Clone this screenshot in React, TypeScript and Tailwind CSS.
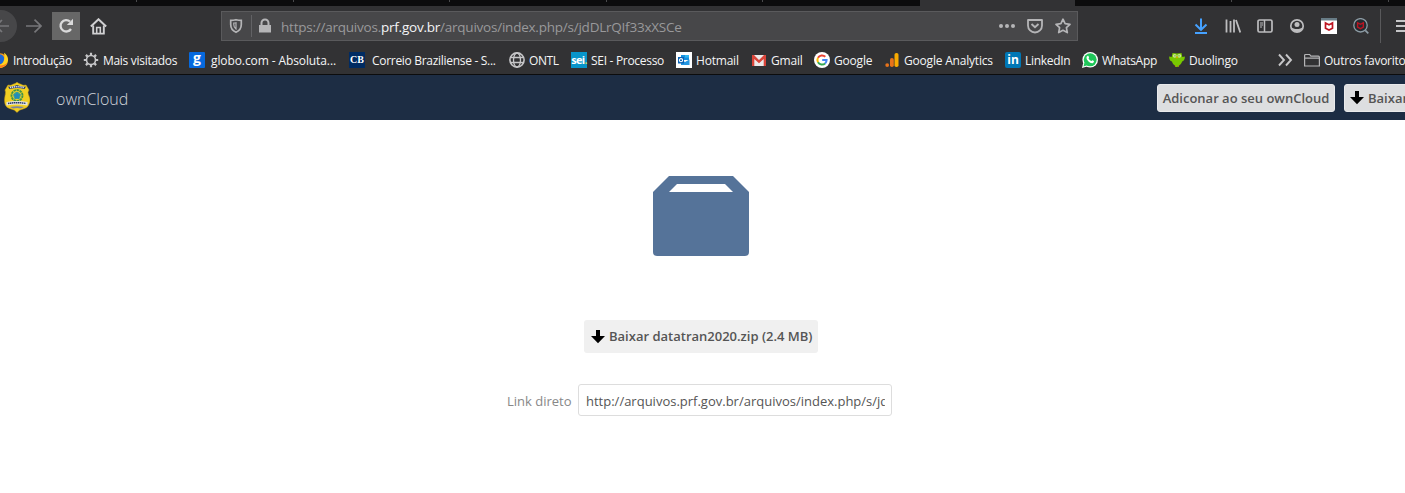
import React from "react";

type Bookmark = { label: string; box: string; text: string; icon: React.ReactNode };

const Svg = ({ children, size = 16, className = "" }: { children: React.ReactNode; size?: number; className?: string }) => (
  <svg width={size} height={size} viewBox="0 0 16 16" className={`block shrink-0 ${className}`}>
    {children}
  </svg>
);

const Firefox = () => (
  <Svg>
    <circle cx="8" cy="8.500" r="7.200" fill="#ff9b15" />
    <circle cx="7.500" cy="7.200" r="5" fill="#1c67d8" />
    <path d="M12 .8c3 2 4.300 4.300 4 7.700-.4 4.300-3.500 7.300-8 7.300-3 0-5-1.400-6.500-3.500 3 1.600 6.500 1 8.500-.8 2.300-2.300 3-6 2-10.700z" fill="#ffd31f" />
    <path d="M1.500 12c2 3 6 4.500 9.500 3.100 2-.8 3.800-2.500 4.500-4.600-3 3.500-9 4-14 1.500z" fill="#ff7a1c" />
  </Svg>
);

const Gear = () => (
  <Svg>
    <g stroke="#c6c6c8" fill="none">
      <circle cx="8" cy="8" r="4.500" strokeWidth="1.600" />
      <path d="M8 .8v2.500M8 12.700v2.500M.8 8h2.500M12.700 8h2.500M2.900 2.900l1.700 1.700M11.400 11.400l1.700 1.700M2.900 13.100l1.700-1.700M11.400 4.600l1.700-1.700" strokeWidth="2.200" />
    </g>
  </Svg>
);

const Tile = ({ className, children }: { className: string; children: React.ReactNode }) => (
  <span className={`flex h-4 w-4 shrink-0 items-center justify-center ${className}`}>{children}</span>
);

const Globe = () => (
  <Svg>
    <g fill="none" stroke="#c6c6c8" strokeWidth="1.300">
      <circle cx="8" cy="8" r="7.100" strokeWidth="1.600" />
      <ellipse cx="8" cy="8" rx="3.500" ry="7" />
      <path d="M1.500 5.500h13M1.500 10.500h13" />
    </g>
  </Svg>
);

const Outlook = () => (
  <Svg>
    <path d="M0 0h16v16H0z" fill="#fff" />
    <path d="M5 3h8v5H5z" fill="#1490df" />
    <path d="M9 3h4v2.500H9z" fill="#32b8f2" />
    <path d="M5 7.500 9 10l4.500-2.500V13H5z" fill="#2596e2" />
    <path d="M2 5h6v6.500H2z" fill="#0a64b8" />
    <circle cx="5" cy="8.200" r="1.600" fill="none" stroke="#fff" strokeWidth="1.100" />
  </Svg>
);

const Gmail = () => (
  <Svg>
    <path d="M1 3h14v11H1z" fill="#eceaea" />
    <path d="M1 3h2l5 5 5-5h2v11h-2.300V7L8 11.200 3.300 7v7H1z" fill="#d9453a" />
  </Svg>
);

const Google = () => (
  <Svg>
    <circle cx="8" cy="8" r="8" fill="#fff" />
    <g fill="none" strokeWidth="2">
      <path d="M11.300 4.800A4.600 4.600 0 0 0 4 5.800" stroke="#ea4335" />
      <path d="M4 5.800a4.600 4.600 0 0 0 0 4.500" stroke="#fbbc05" />
      <path d="M4 10.300a4.600 4.600 0 0 0 7.100 1.100" stroke="#34a853" />
      <path d="M11.100 11.400A4.600 4.600 0 0 0 12.600 8H8.200" stroke="#4285f4" />
    </g>
  </Svg>
);

const Analytics = () => (
  <Svg>
    <rect x="10.500" y="1" width="4" height="14" rx="1.800" fill="#f9ab00" />
    <rect x="6" y="6" width="3.800" height="9" rx="1.800" fill="#e8731a" />
    <circle cx="3.200" cy="13.100" r="1.900" fill="#e8731a" />
  </Svg>
);

const WhatsApp = () => (
  <Svg>
    <circle cx="8.200" cy="7.800" r="7.800" fill="#fff" />
    <path d="M0 16l1.200-5L5 14.500z" fill="#fff" />
    <circle cx="8.200" cy="7.800" r="6.500" fill="#1fc659" />
    <path d="M1.500 14.500l1-4 2.700 2.800z" fill="#1fc659" />
    <path d="M5.200 4.200c.9-.8 1.400-.2 1.800 1.200.1.500-.5.900-.5 1.200.6 1.200 1.500 2 2.700 2.500.4 0 .8-1 1.200-.8l1.500.8c.3.300-.2 1.800-1.300 2.100C8.200 11.700 4.300 8 4.500 5.500c0-.5.300-1 .7-1.300z" fill="#fff" />
  </Svg>
);

const Duolingo = () => (
  <Svg>
    <path d="M3.500 1c1.500 0 3 .5 4.500.5S11 1 12.500 1l.8 4 2.500-.5c.3 2.800-1 4.400-2.700 5C12.500 12 11 13 9.500 13.500L8.500 15H7l-.5-1.500C4.800 13 3.500 12 3 9.500 1 9 .1 7.500.2 4.500l2.500.5z" fill="#78c800" />
    <circle cx="5.700" cy="3.800" r="1.900" fill="#c9ed8c" />
    <circle cx="10.300" cy="3.800" r="1.900" fill="#c9ed8c" />
    <circle cx="6" cy="3.800" r=".6" fill="#5c6b3b" />
    <circle cx="10" cy="3.800" r=".6" fill="#5c6b3b" />
    <path d="M6.900 4.800h2.200L8 6.800z" fill="#ff9c00" />
    <path d="M5.500 13.500h1.700l-.7 1.500zM8.800 13.500h1.700l-1 1.500z" fill="#d9b400" />
  </Svg>
);

const bookmarks: Bookmark[] = [
  { label: "Introdução", box: "w-[91px] gap-[5px]", text: "tracking-[-0.25px]", icon: <Firefox /> },
  { label: "Mais visitados", box: "w-[106px] gap-1", text: "tracking-[-0.3px]", icon: <Gear /> },
  {
    label: "globo.com - Absoluta...", box: "w-[160px] gap-[6px]", text: "tracking-[-0.1px]",
    icon: <Tile className="rounded-[1px] bg-[#0669de] font-['Open_Sans',sans-serif] text-[14px] font-bold text-white"><span className="-mt-1">g</span></Tile>,
  },
  {
    label: "Correio Braziliense - S...", box: "w-[160px] gap-[7px]", text: "tracking-[-0.3px]",
    icon: <Tile className="bg-[#002b62] font-['Liberation_Serif',serif] text-[10px] font-bold text-white"><span>CB</span></Tile>,
  },
  { label: "ONTL", box: "w-[62px] gap-1", text: "tracking-[-0.4px]", icon: <Globe /> },
  {
    label: "SEI - Processo", box: "w-[105px] gap-1", text: "tracking-[-0.3px]",
    icon: <Tile className="bg-[#0895ca] font-['Open_Sans',sans-serif] text-[11px] font-bold tracking-[-0.7px] text-white"><span className="-mt-px">sei<span className="text-[#b6db71]">.</span></span></Tile>,
  },
  { label: "Hotmail", box: "w-[75px] gap-1", text: "tracking-[-0.2px]", icon: <Outlook /> },
  { label: "Gmail", box: "w-[63px] gap-1", text: "tracking-[-0.2px]", icon: <Gmail /> },
  { label: "Google", box: "w-[70px] gap-1", text: "tracking-[-0.2px]", icon: <Google /> },
  { label: "Google Analytics", box: "w-[121px] gap-1", text: "tracking-[-0.2px]", icon: <Analytics /> },
  {
    label: "LinkedIn", box: "w-[77px] gap-1", text: "tracking-[-0.3px]",
    icon: <Tile className="rounded-[2px] bg-[#0077b5] font-['Open_Sans',sans-serif] text-[12px] font-bold text-white"><span className="-mt-px">in</span></Tile>,
  },
  { label: "WhatsApp", box: "w-[87px] gap-1", text: "tracking-[-0.3px]", icon: <WhatsApp /> },
  { label: "Duolingo", box: "w-[109px] gap-1", text: "tracking-[-0.2px]", icon: <Duolingo /> },
];

const TabStrip = () => (
  <div className="flex h-[6px] bg-[#0c0c0d]">
    <div className="h-[2px] w-[137px] shrink-0 border-r border-[#4a4a4c]" />
    <div className="h-[2px] w-[157px] shrink-0 border-r border-[#4a4a4c]" />
    <div className="h-[2px] w-[156px] shrink-0 border-r border-[#4a4a4c]" />
    <div className="h-[2px] w-[157px] shrink-0 border-r border-[#4a4a4c]" />
    <div className="h-[2px] w-[156px] shrink-0 border-r border-[#4a4a4c]" />
    <div className="h-full w-[157px] shrink-0" />
    <div className="h-full w-[155px] shrink-0 bg-[#323234]" />
    <div className="h-[2px] w-[157px] shrink-0 border-r border-[#4a4a4c]" />
    <div className="h-[2px] w-[157px] shrink-0 border-r border-[#4a4a4c]" />
  </div>
);

const Shield = () => (
  <Svg className="ml-[6px]">
    <path d="M8 1.700c2 .5 3.600.7 5.300.7v4.200c0 3.600-1.700 6.200-5.300 7.700-3.600-1.500-5.300-4.100-5.300-7.700V2.400C4.400 2.400 6 2.200 8 1.700z" fill="none" stroke="#b5b5b7" strokeWidth="1.700" />
    <path d="M8 4.800c-1 .3-1.500.4-2.200.4v1.600c0 1.800.7 3.200 2.200 4.200z" fill="none" stroke="#b5b5b7" strokeWidth="1.200" />
  </Svg>
);

const McAfee = () => <path d="M4.500 5l2 1L8 6.700 9.500 6l2-1v5.200L8 12l-3.500-1.800z" fill="none" stroke="#bd1421" strokeWidth="1.700" />;

const NavBar = () => (
  <div className="flex h-[40px] items-center overflow-hidden">
    <div className="-ml-[13px] flex h-[32px] w-[30px] shrink-0 items-center justify-end rounded-r-full bg-[#474749]">
      <Svg className="mr-[7px]"><path d="M15 8H3m5-6L2 8l6 6" stroke="#77777a" strokeWidth="1.700" fill="none" /></Svg>
    </div>
    <Svg className="ml-[9px]"><path d="M0 8h14.500M8.500 1.700 15 8l-6.500 6.300" stroke="#77777a" strokeWidth="1.700" fill="none" /></Svg>
    <div className="ml-[10px] flex h-7 w-7 shrink-0 items-center justify-center bg-[#676767]">
      <Svg><path d="M12 3.500A5.700 5.700 0 1 0 13 11" stroke="#dadadb" strokeWidth="2.300" fill="none" /><path d="M15 .8V7H8.800z" fill="#dadadb" /></Svg>
    </div>
    <Svg className="ml-[10px]" size={17}>
      <path d="M.8 8 8 1.200 15.200 8" stroke="#d0d0d2" strokeWidth="1.900" fill="none" />
      <path d="M3 7v7.700h10V7" stroke="#d0d0d2" strokeWidth="1.800" fill="none" />
      <path d="M6.300 14V9h3.400v5" stroke="#d0d0d2" strokeWidth="1.500" fill="none" />
    </Svg>
    <div className="ml-[114px] flex h-[30px] w-[857px] shrink-0 items-center border border-[#5a5a5c] bg-[#474749]">
      <Shield />
      <div className="ml-[7px] h-[22px] w-px bg-[#626265]" />
      <Svg className="ml-[5px]">
        <path d="M2 7h12v7.500H2z" fill="#b5b5b7" />
        <path d="M4.500 7.500V5a3.500 3.500 0 0 1 7 0v2.500" stroke="#b5b5b7" strokeWidth="2" fill="none" />
      </Svg>
      <div className="ml-[8px] w-[718px] whitespace-nowrap pt-[2px] font-['Open_Sans',sans-serif] text-[13.500px] leading-[20px] tracking-[-0.23px] text-[#99999b]">
        https://arquivos.<span className="text-[#f5f5f6]">prf.gov.br</span>/arquivos/index.php/s/jdDLrQIf33xXSCe
      </div>
      <Svg><g fill="#b5b5b7"><circle cx="2" cy="8" r="2" /><circle cx="8" cy="8" r="2" /><circle cx="14" cy="8" r="2" /></g></Svg>
      <Svg className="ml-3">
        <path d="M1 2h14v5.500a7 7 0 0 1-14 0z" stroke="#b5b5b7" strokeWidth="1.800" fill="none" strokeLinejoin="round" />
        <path d="M4.500 6 8 9.300 11.500 6" stroke="#b5b5b7" strokeWidth="1.900" fill="none" />
      </Svg>
      <Svg className="ml-3"><path d="m8 1.200 2.100 4.500 4.900.6-3.600 3.400.9 4.900L8 12.300l-4.300 2.300.9-4.900L1 6.300l4.900-.6z" stroke="#b5b5b7" strokeWidth="1.700" fill="none" strokeLinejoin="round" /></Svg>
    </div>
    <Svg className="ml-[115px]"><path d="M8 .5v11M2.500 6.500 8 11.800l5.500-5.300M2 15h12" stroke="#45a1ff" strokeWidth="2" fill="none" /></Svg>
    <Svg className="ml-4"><path d="M1.500 1.500v13M5.500 3v11.500M9 1.500v13M11 2l4.300 12.500" stroke="#bdbdbf" strokeWidth="1.800" fill="none" /></Svg>
    <Svg className="ml-4">
      <rect x="1" y="2" width="14" height="12" rx="1.500" stroke="#bdbdbf" strokeWidth="1.700" fill="none" />
      <path d="M7.500 2v12" stroke="#bdbdbf" strokeWidth="1.500" />
      <path d="M3 5h3M3 7h3M3 9h2" stroke="#bdbdbf" strokeWidth="1" />
    </Svg>
    <Svg className="ml-4">
      <circle cx="8" cy="8" r="6.200" stroke="#bdbdbf" strokeWidth="1.700" fill="none" />
      <circle cx="8" cy="6.400" r="2.500" fill="#bdbdbf" />
      <path d="M2.500 9c1 1.500 3 2 5.500 2s4.500-.5 5.500-2c-.5 3.500-2.500 5-5.500 5s-5-1.500-5.500-5z" fill="#bdbdbf" />
    </Svg>
    <Svg className="ml-4"><path d="M0 0h16v16H0z" fill="#fff" /><path d="M0 0h16v2.500H0z" fill="#687c86" /><McAfee /></Svg>
    <Svg className="ml-4">
      <circle cx="7.500" cy="7.300" r="6.700" fill="#252b30" stroke="#8d9ca5" strokeWidth="1.300" />
      <g transform="translate(.9 .8) scale(.82)"><McAfee /></g>
      <path d="m12.300 12.300 3 3" stroke="#8d9ca5" strokeWidth="1.700" />
    </Svg>
    <div className="ml-[11px] h-[34px] w-px shrink-0 bg-[#59595b]" />
    <Svg className="ml-[15px]"><path d="M0 3h16M0 8h16M0 13h16" stroke="#c6c6c8" strokeWidth="2" /></Svg>
  </div>
);

const Bookmarks = () => (
  <div className="flex h-[28px] items-center overflow-hidden whitespace-nowrap font-['Open_Sans',sans-serif] text-[12px] leading-[18px] text-[#f5f5f6]">
    <div className="-ml-2 flex shrink-0 items-center">
      {bookmarks.map((b) => (
        <div key={b.label} className={`flex shrink-0 items-center ${b.box}`}>
          {b.icon}
          <span className={`pt-px ${b.text}`}>{b.label}</span>
        </div>
      ))}
    </div>
    <Svg><path d="m1 2.500 5 5.500-5 5.500M8 2.500 13 8l-5 5.500" stroke="#c6c6c8" strokeWidth="1.900" fill="none" /></Svg>
    <div className="ml-[10px] flex shrink-0 items-center gap-1">
      <Svg><path d="M.6 14V3.500q0-1 1-1h4l1.300 1.700h7.500q1 0 1 1V14zM.6 6.200h14.800" stroke="#b5b5b7" strokeWidth="1.200" fill="none" /></Svg>
      <span className="pt-px tracking-[-0.25px]">Outros favoritos</span>
    </div>
  </div>
);

const Badge = () => (
  <svg width="26" height="31" viewBox="0 0 26 31" className="block shrink-0">
    <path d="M4 3q3 1 5-.8Q11 2 13 .3 15 2 17 2.200 19 4 22 3l3 5q-2 2 0 6t0 8q-1 4-6 5-4 .5-6 3.500Q11 27.500 7 27q-5-1-6-5-1-4 0-8t0-6z" fill="#f1cf22" stroke="#c69714" strokeWidth=".5" />
    <path d="M4 4.500q4 1 9-1.500 5 2.500 9 1.500l-1.500 2.500q-7-2-15 0z" fill="#293a72" />
    <path d="M6 5.500q7-1.500 14 0" stroke="#dfe3ed" strokeWidth="1.500" strokeDasharray="1.200 .7" fill="none" />
    <circle cx="13" cy="13.500" r="5.500" fill="#e5ce32" stroke="#419447" strokeWidth="1.800" strokeDasharray="2.500 .6" />
    <circle cx="13" cy="13.500" r="3.500" fill="#3fa58a" />
    <path d="m13 9.500 1.200 2.700 3 .4-2.200 2 .5 2.900-2.500-1.400-2.500 1.400.5-2.900-2.200-2 3-.4z" fill="#238bba" />
    <path d="M2.500 20q10.500-2 21 0v3.500q-10.500-2-21 0z" fill="#e4e5df" />
    <path d="M4 21.500q9-1.600 18 0" stroke="#26376b" strokeWidth="1.400" strokeDasharray="1.500 .5" fill="none" />
    <path d="M6 25q7-1.500 14 0l-3 1.500q-4-1-8 0z" fill="#7b83a0" />
  </svg>
);

const DownArrow = () => (
  <Svg><path d="M6 1h4v6h5l-7 7.300L1 7h5z" fill="#000" /></Svg>
);

const Header = () => (
  <header className="flex h-[45px] items-center overflow-hidden bg-[#1d2d44] font-['Open_Sans',sans-serif]">
    <div className="ml-1 pb-px"><Badge /></div>
    <span className="ml-[26px] w-[1101px] shrink-0 pt-[2px] text-[16px] font-light leading-[22px] text-[#d0d4da]">ownCloud</span>
    <button className="flex h-7 w-[178px] shrink-0 items-center justify-center whitespace-nowrap rounded-[3px] border border-[#e9eaec] bg-[#dddee0] text-[13px] font-semibold text-[#555]">
      <span className="pt-[2px]">Adiconar ao seu ownCloud</span>
    </button>
    <button className="ml-[9px] flex h-7 w-[90px] shrink-0 items-center gap-[3px] whitespace-nowrap rounded-[3px] border border-[#e9eaec] bg-[#dddee0] pl-1 text-[13px] font-semibold text-[#555]">
      <DownArrow /><span className="pt-[2px]">Baixar</span>
    </button>
  </header>
);

export default function App() {
  return (
    <div className="h-[493px] w-[1405px] overflow-hidden bg-white">
      <div className="h-[75px] border-b border-[#0c0c0d] bg-[#323234]">
        <TabStrip />
        <NavBar />
        <Bookmarks />
      </div>
      <Header />
      <main className="flex flex-col items-center pr-[3px] pt-[56px] font-['Open_Sans',sans-serif] text-[13px]">
        <svg width="96" height="80" viewBox="0 0 96 80" className="block">
          <path d="M16 0h64l16 16v60q0 4-4 4H4q-4 0-4-4V16zM24 8l-8 8h64l-8-8z" fill="#557399" fillRule="evenodd" />
        </svg>
        <button className="mt-[64px] flex h-[33px] w-[234px] items-center gap-[3px] whitespace-nowrap rounded-[3px] bg-[#f0f0f0] pl-[6px] font-semibold text-[#555]">
          <DownArrow />Baixar datatran2020.zip (2.4 MB)
        </button>
        <div className="mt-[31px] flex items-center self-start pl-[507px]">
          <label className="w-[71px] pt-[3px] text-[#888]">Link direto</label>
          <div className="h-8 w-[314px] rounded-[3px] border border-[#ddd] pl-[7px] pr-[6px]">
            <div className="overflow-hidden whitespace-nowrap pt-1.5 leading-[20px] text-[#555]">http://arquivos.prf.gov.br/arquivos/index.php/s/jdDLrQIf33xXSCe</div>
          </div>
        </div>
      </main>
    </div>
  );
}
